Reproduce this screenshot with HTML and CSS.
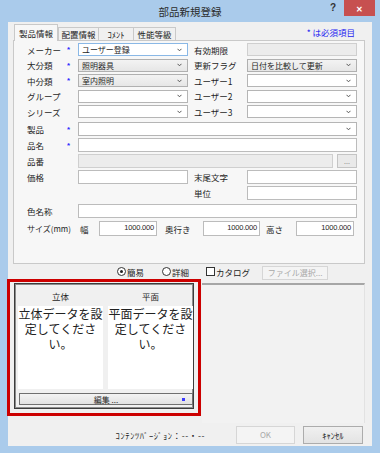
FILE: index.html
```html
<!DOCTYPE html>
<html lang="ja">
<head>
    <meta charset="UTF-8">
    <meta name="viewport" content="width=device-width, initial-scale=1.0">
    <title>部品新規登録</title>
    <link rel="stylesheet" href="styles.css">
</head>
<body>

    <div class="window">
        <div class="titlebar">
            <span></span>
            <span class="title">部品新規登録</span>
            <div class="caption">
                <span class="help">?</span>
                <span class="close">✕</span>
            </div>
        </div>

        <div class="client">
            <div class="tabs">
                <span class="tab active">製品情報</span>
                <span class="tab t2">配置情報</span>
                <span class="tab t3">ｺﾒﾝﾄ</span>
                <span class="tab t4">性能等級</span>
                <span class="req-note">* は必須項目</span>
            </div>

            <div class="panel">
                <!-- 上段：分類とユーザー項目 -->
                <div class="grid-top">
                    <span class="lbl">メーカー</span><span class="req">*</span>
                    <div class="combo focus"><span>ユーザー登録</span><svg class="chev" width="5" height="4" viewBox="0 0 5 4"><polyline points="0.5,0.8 2.5,2.8 4.5,0.8" fill="none" stroke="#555" stroke-width="1"/></svg></div>
                    <span class="lbl col5">有効期限</span>
                    <div class="inp disabled"></div>

                    <span class="lbl">大分類</span><span class="req">*</span>
                    <div class="combo ro"><span>照明器具</span><svg class="chev" width="5" height="4" viewBox="0 0 5 4"><polyline points="0.5,0.8 2.5,2.8 4.5,0.8" fill="none" stroke="#555" stroke-width="1"/></svg></div>
                    <span class="lbl col5">更新フラグ</span>
                    <div class="combo ro"><span>日付を比較して更新</span><svg class="chev" width="5" height="4" viewBox="0 0 5 4"><polyline points="0.5,0.8 2.5,2.8 4.5,0.8" fill="none" stroke="#555" stroke-width="1"/></svg></div>

                    <span class="lbl">中分類</span><span class="req">*</span>
                    <div class="combo ro"><span>室内照明</span><svg class="chev" width="5" height="4" viewBox="0 0 5 4"><polyline points="0.5,0.8 2.5,2.8 4.5,0.8" fill="none" stroke="#555" stroke-width="1"/></svg></div>
                    <span class="lbl col5">ユーザー1</span>
                    <div class="combo"><span></span><svg class="chev" width="5" height="4" viewBox="0 0 5 4"><polyline points="0.5,0.8 2.5,2.8 4.5,0.8" fill="none" stroke="#555" stroke-width="1"/></svg></div>

                    <span class="lbl">グループ</span><span></span>
                    <div class="combo"><span></span><svg class="chev" width="5" height="4" viewBox="0 0 5 4"><polyline points="0.5,0.8 2.5,2.8 4.5,0.8" fill="none" stroke="#555" stroke-width="1"/></svg></div>
                    <span class="lbl col5">ユーザー2</span>
                    <div class="combo"><span></span><svg class="chev" width="5" height="4" viewBox="0 0 5 4"><polyline points="0.5,0.8 2.5,2.8 4.5,0.8" fill="none" stroke="#555" stroke-width="1"/></svg></div>

                    <span class="lbl">シリーズ</span><span></span>
                    <div class="combo"><span></span><svg class="chev" width="5" height="4" viewBox="0 0 5 4"><polyline points="0.5,0.8 2.5,2.8 4.5,0.8" fill="none" stroke="#555" stroke-width="1"/></svg></div>
                    <span class="lbl col5">ユーザー3</span>
                    <div class="combo"><span></span><svg class="chev" width="5" height="4" viewBox="0 0 5 4"><polyline points="0.5,0.8 2.5,2.8 4.5,0.8" fill="none" stroke="#555" stroke-width="1"/></svg></div>
                </div>

                <!-- 下段：製品項目 -->
                <div class="form-row first">
                    <span class="lbl w40">製品</span><span class="req w11">*</span>
                    <div class="combo wide"><span></span><svg class="chev" width="5" height="4" viewBox="0 0 5 4"><polyline points="0.5,0.8 2.5,2.8 4.5,0.8" fill="none" stroke="#555" stroke-width="1"/></svg></div>
                </div>
                <div class="form-row">
                    <span class="lbl w40">品名</span><span class="req w11">*</span>
                    <div class="inp wide"></div>
                </div>
                <div class="form-row">
                    <span class="lbl w40">品番</span><span class="w11"></span>
                    <div class="inp disabled code"></div>
                    <span class="dots-btn">...</span>
                </div>
                <div class="form-row">
                    <span class="lbl w40">価格</span><span class="w11"></span>
                    <div class="inp half"></div>
                    <span class="lbl w53 gap6">末尾文字</span>
                    <div class="inp half"></div>
                </div>
                <div class="form-row">
                    <span class="lbl w53 unit">単位</span>
                    <div class="inp half"></div>
                </div>
                <div class="form-row color">
                    <span class="lbl w40">色名称</span><span class="w11"></span>
                    <div class="inp wide"></div>
                </div>
                <div class="form-row size">
                    <span class="lbl size-lbl">サイズ(mm)</span>
                    <span class="lbl s-w">幅</span>
                    <div class="inp num n1">1000.000</div>
                    <span class="lbl s-d">奥行き</span>
                    <div class="inp num n2">1000.000</div>
                    <span class="lbl s-h">高さ</span>
                    <div class="inp num n3">1000.000</div>
                </div>
            </div>

            <div class="mode-row">
                <span class="radio checked"></span><span class="opt">簡易</span>
                <span class="radio r2"></span><span class="opt">詳細</span>
                <span class="check"></span><span class="opt">カタログ</span>
                <span class="btn disabled file-btn">ファイル選択...</span>
            </div>

            <div class="lower">
                <div class="highlight">
                    <div class="preview">
                        <div class="preview-head">
                            <span>立体</span>
                            <span>平面</span>
                        </div>
                        <div class="preview-boxes">
                            <div class="pbox">立体データを設定してください。</div>
                            <div class="pbox">平面データを設定してください。</div>
                        </div>
                        <div class="edit-btn">
                            <span></span>
                            <span>編集 ...</span>
                            <span class="dot"></span>
                        </div>
                    </div>
                </div>
                <div class="side-panel"></div>
            </div>

            <div class="footer">
                <span class="version">ｺﾝﾃﾝﾂﾊﾞｰｼﾞｮﾝ：--・--</span>
                <span class="btn disabled ok-btn">OK</span>
                <span class="btn cancel-btn">ｷｬﾝｾﾙ</span>
            </div>
        </div>
    </div>

</body>
</html>
```

FILE: styles.css
```css
body {
    margin: 0;
    font-family: "Noto Sans CJK JP", "Noto Sans", sans-serif;
    font-size: 8px;
    color: #1e1e1e;
}

.window {
    width: 380px;
    height: 453px;
    background-color: #aacbeb;
}

/* タイトルバー */
.titlebar {
    height: 22px;
    display: grid;
    grid-template-columns: 1fr auto 1fr;
}

.title {
    align-self: center;
    font-size: 10.5px;
    color: #2b2b2b;
    padding-top: 1px;
}

.caption {
    justify-self: end;
    display: flex;
    align-items: flex-start;
}

.help {
    flex: none;
    font-family: "Liberation Sans", sans-serif;
    font-size: 10px;
    font-weight: bold;
    color: #333;
    margin: 2px 8px 0 0;
}

.close {
    flex: none;
    width: 31px;
    height: 16px;
    margin-right: 5px;
    background-color: #c75050;
    color: #fff;
    font-size: 8px;
    font-weight: bold;
    display: flex;
    align-items: center;
    justify-content: center;
}

.client {
    margin: 0 8px;
    height: 424px;
    box-sizing: border-box;
    background-color: #f0f0f0;
    padding: 2px 7px 0 5px;
}

/* タブ */
.tabs {
    display: flex;
    align-items: flex-end;
    height: 16px;
    padding-left: 1px;
}

.tab {
    box-sizing: border-box;
    height: 13px;
    border: 1px solid #c9c9c9;
    border-bottom: none;
    background-color: #f0f0f0;
    font-size: 8.5px;
    display: flex;
    align-items: center;
    justify-content: center;
    margin-left: -1px;
}

.tab.active {
    width: 44px;
    height: 17px;
    margin-bottom: -1px;
    margin-left: 0;
    position: relative;
    z-index: 1;
    background-color: #f7f7f7;
}

.tab.t2 { width: 41px; margin-left: 0; }
.tab.t3 { width: 36px; font-size: 8.5px; }
.tab.t4 { width: 43px; }

.req-note {
    margin-left: auto;
    margin-right: 10px;
    align-self: center;
    color: #2424f0;
    font-size: 8.5px;
}

.panel {
    height: 224px;
    box-sizing: border-box;
    border: 1px solid #c9c9c9;
    padding: 2px 0 0 13px;
    background-color: #f7f7f7;
}

/* 上段グリッド */
.grid-top {
    display: grid;
    grid-template-columns: 40px 11px 110px 6px 53px 110px;
    grid-auto-rows: 13px;
    row-gap: 2.5px;
}

.lbl {
    display: flex;
    align-items: center;
    white-space: nowrap;
    font-size: 8.5px;
}

.col5 {
    grid-column: 5;
}

.req {
    color: #2a2aff;
    font-family: "Liberation Sans", sans-serif;
    font-size: 8px;
    font-weight: bold;
    display: flex;
    align-items: center;
}

.combo {
    box-sizing: border-box;
    border: 1px solid #b5b5b5;
    background-color: #fff;
    display: flex;
    align-items: center;
    padding-left: 3px;
    white-space: nowrap;
}

.combo.ro {
    background: linear-gradient(#f3f3f3, #e6e6e6);
    border-color: #b0b0b0;
}

.combo.focus {
    border-color: #8ab8e6;
}

.chev {
    margin-left: auto;
    margin-right: 5px;
}

.inp {
    box-sizing: border-box;
    border: 1px solid #bcbcbc;
    background-color: #fff;
}

.inp.disabled {
    background-color: #ececec;
    border-color: #cfcfcf;
}

/* 下段 */
.form-row {
    display: flex;
    align-items: stretch;
    height: 14px;
    margin-top: 2px;
}

.form-row.first { margin-top: 4px; }
.form-row.color { margin-top: 4px; }
.form-row.size { margin-top: 3px; height: 15px; }

.w40 { width: 40px; }
.w11 { width: 11px; }
.w53 { width: 53px; }
.gap6 { margin-left: 6px; }
.unit { margin-left: 167px; }

.wide { width: 279px; }
.half { width: 110px; }
.code { width: 255px; }

.dots-btn {
    width: 20px;
    margin-left: 4px;
    box-sizing: border-box;
    border: 1px solid #c4c4c4;
    background-color: #e9e9e9;
    color: #888;
    font-size: 7px;
    display: flex;
    align-items: center;
    justify-content: center;
}

.size-lbl { width: 53px; font-size: 8px; }
.s-w { width: 19px; }
.s-d { width: 38px; margin-left: 8px; }
.s-h { width: 30px; margin-left: 6px; }

.num {
    font-family: "Liberation Sans", sans-serif;
    font-size: 7.5px;
    letter-spacing: -0.2px;
    text-align: right;
    padding: 1px 2px 0 0;
}

.n1 { width: 58px; }
.n2 { width: 57px; }
.n3 { width: 58px; }

/* 表示モード */
.mode-row {
    display: flex;
    align-items: center;
    height: 15px;
    padding-left: 104px;
}

.radio {
    width: 7px;
    height: 7px;
    border: 1px solid #333;
    border-radius: 50%;
    background-color: #fff;
    display: flex;
    align-items: center;
    justify-content: center;
}

.radio.checked::after {
    content: "";
    width: 3px;
    height: 3px;
    border-radius: 50%;
    background-color: #222;
}

.radio.r2 { margin-left: 18px; }

.check {
    width: 7px;
    height: 7px;
    border: 1px solid #333;
    background-color: #fff;
    margin-left: 17px;
}

.opt {
    font-size: 8.5px;
    margin-left: 1px;
}

.btn {
    box-sizing: border-box;
    border: 1px solid #acacac;
    background: linear-gradient(#f0f0f0, #e3e3e3);
    display: flex;
    align-items: center;
    justify-content: center;
    font-size: 8px;
}

.btn.disabled {
    background: #f4f4f4;
    border-color: #d6d6d6;
    color: #a8a8a8;
}

.file-btn {
    width: 66px;
    height: 14px;
    margin-left: 12px;
    margin-top: 2px;
}

/* プレビュー */
.lower {
    display: flex;
    align-items: flex-start;
    margin-left: -6px;
    height: 144px;
}

.highlight {
    width: 194px;
    height: 137px;
    box-sizing: border-box;
    border: 3px solid #cc0000;
    padding: 1px 4px 3px 4px;
}

.preview {
    height: 126px;
    box-sizing: border-box;
    border: 1px solid #3c3c3c;
    box-shadow: inset 0 0 0 1px #8c8c8c;
    padding: 2px 0 0 2px;
}

.preview-head {
    display: grid;
    grid-template-columns: 85px 85px;
    column-gap: 5px;
    height: 20px;
    padding-left: 1px;
    font-size: 8.5px;
}

.preview-head span {
    text-align: center;
    align-self: center;
}

.preview-boxes {
    display: flex;
    gap: 5px;
    padding-left: 1px;
}

.pbox {
    width: 85px;
    height: 83px;
    background-color: #fff;
    font-size: 12px;
    line-height: 15px;
    text-align: center;
    color: #222;
}

.edit-btn {
    width: 174px;
    height: 12px;
    box-sizing: border-box;
    margin: 4px 0 0 2px;
    border: 1px solid #6f6f6f;
    background: linear-gradient(#f3f3f3, #e1e1e1);
    display: grid;
    grid-template-columns: 1fr auto 1fr;
    align-items: center;
    font-size: 8px;
}

.edit-btn .dot {
    justify-self: end;
    width: 3px;
    height: 3px;
    margin-right: 7px;
    background-color: #3b3bff;
}

.side-panel {
    width: 163px;
    height: 140px;
    box-sizing: border-box;
    margin: 4px 0 0 1px;
    border-top: 2px solid #a6a6a6;
    border-right: 1px solid #e2e2e2;
    background-color: #f2f2f2;
}

/* フッター */
.footer {
    display: flex;
    align-items: center;
    justify-content: flex-end;
    height: 23px;
    padding: 0 2px 0 0;
}

.version {
    font-size: 8.5px;
    letter-spacing: 0.6px;
    margin-right: 31px;
}

.ok-btn {
    width: 59px;
    height: 18px;
    margin-right: 8px;
}

.cancel-btn {
    width: 60px;
    height: 18px;
    font-size: 8.5px;
}
```
